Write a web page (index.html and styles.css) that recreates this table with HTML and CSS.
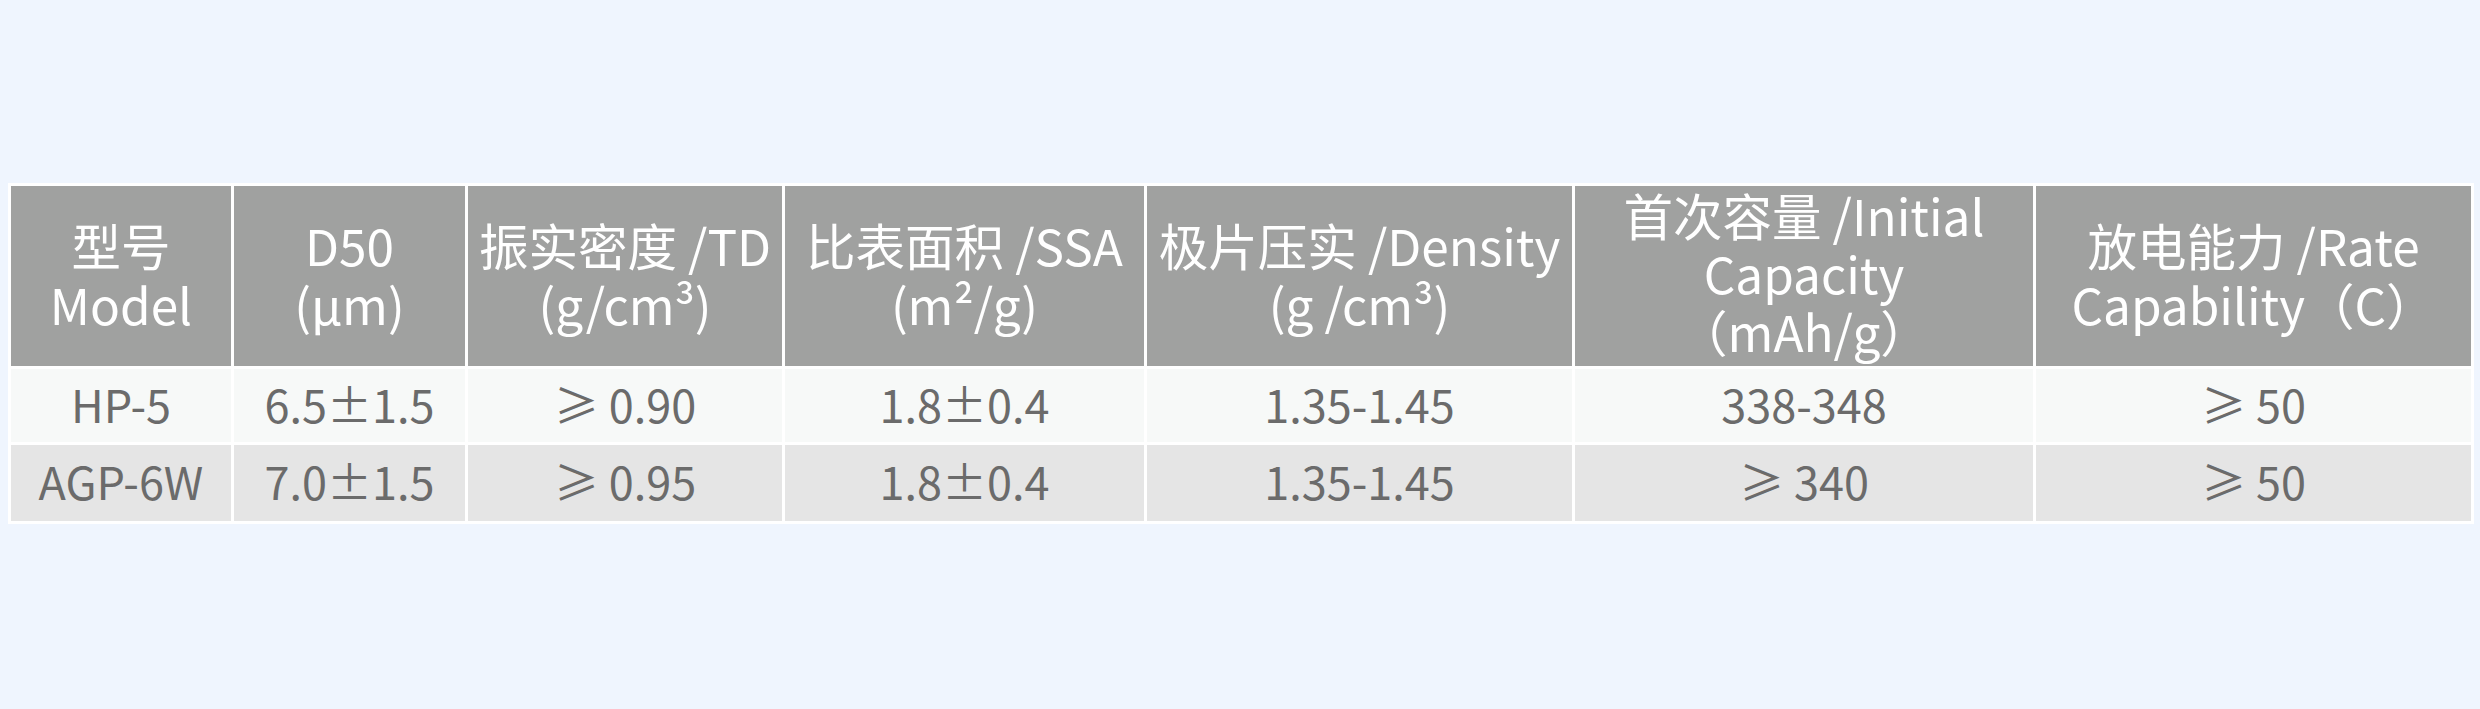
FILE: index.html
```html
<!DOCTYPE html>
<html lang="zh-CN">
<head>
<meta charset="utf-8">
<title>产品参数</title>
<link rel="stylesheet" href="styles.css">
</head>
<body>
<main class="page">
  <table class="spec">
    <colgroup>
      <col class="c1"><col class="c2"><col class="c3"><col class="c4"><col class="c5"><col class="c6"><col class="c7">
    </colgroup>
    <thead>
      <tr class="head">
        <th>型号<br>Model</th>
        <th>D50<br>(μm)</th>
        <th>振实密度 /TD<br>(g/cm³)</th>
        <th>比表面积 /SSA<br>(m²/g)</th>
        <th>极片压实 /Density<br>(g /cm³)</th>
        <th class="tall">首次容量 /Initial<br>Capacity<br>（mAh/g）</th>
        <th>放电能力 /Rate<br>Capability（C）</th>
      </tr>
    </thead>
    <tbody>
      <tr class="row odd">
        <td>HP-5</td>
        <td>6.5±1.5</td>
        <td>≥ 0.90</td>
        <td>1.8±0.4</td>
        <td>1.35-1.45</td>
        <td>338-348</td>
        <td>≥ 50</td>
      </tr>
      <tr class="row even">
        <td>AGP-6W</td>
        <td>7.0±1.5</td>
        <td>≥ 0.95</td>
        <td>1.8±0.4</td>
        <td>1.35-1.45</td>
        <td>≥ 340</td>
        <td>≥ 50</td>
      </tr>
    </tbody>
  </table>
</main>
</body>
</html>
```
FILE: styles.css
```css
html, body {
  margin: 0;
  padding: 0;
  background: #eff5fe;
}

.page {
  height: 709px;
  display: flex;
  align-items: center;
  padding: 0 8px;
  box-sizing: border-box;
}

.spec {
  width: 2464px;
  table-layout: fixed;
  border-collapse: separate;
  border-spacing: 3px;
  background: #ffffff;
  font-family: "Noto Sans CJK SC", "Noto Sans", sans-serif;
  font-size: 45px;
  line-height: 59px;
  margin-top: -2px;
}

.c1 { width: 220px; }
.c2 { width: 231px; }
.c3 { width: 314px; }
.c4 { width: 359px; }
.c5 { width: 425px; }
.c6 { width: 458px; }
.c7 { width: 435px; }

.spec th,
.spec td {
  padding: 0;
  text-align: center;
  vertical-align: middle;
  overflow: hidden;
  white-space: nowrap;
}

.head th {
  height: 180px;
  background: #a0a1a0;
  color: #ffffff;
  font-weight: 400;
  font-size: 49.5px;
  line-height: 59px;
  padding-bottom: 4px;
  box-sizing: border-box;
}

.head th.tall {
  vertical-align: top;
  padding-top: 0;
  padding-bottom: 0;
  line-height: 58px;
}

.row td {
  color: #6b6b6b;
  font-weight: 400;
  padding-bottom: 5px;
  box-sizing: border-box;
}

.row.odd td {
  height: 73px;
  background: #f7f9f8;
}

.row.even td {
  height: 76px;
  background: #e5e5e5;
}
```
